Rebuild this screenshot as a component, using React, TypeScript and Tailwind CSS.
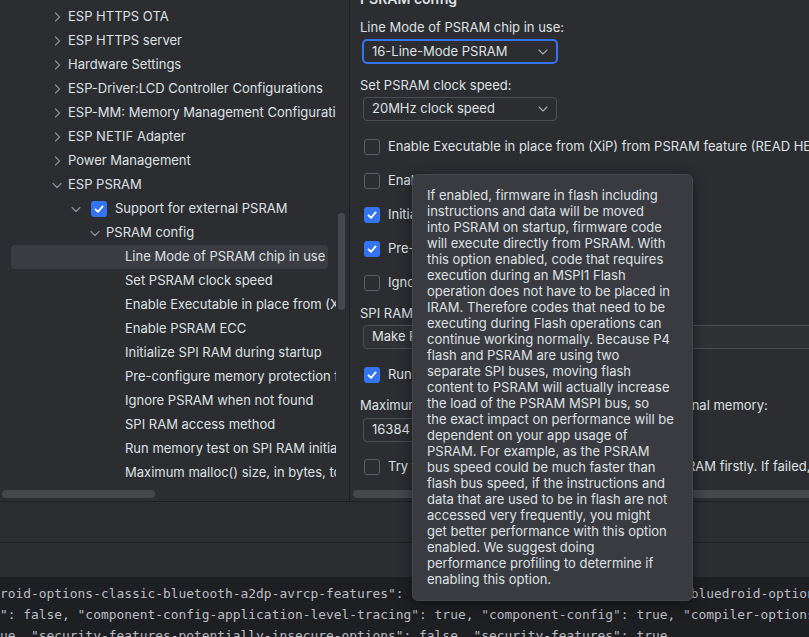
import React from 'react';

type Node = {
  label: string;
  level: number;
  chevron?: 'right' | 'down';
  checkbox?: boolean;
  selected?: boolean;
};

const tree: Node[] = [
  { label: 'ESP HTTPS OTA', level: 0, chevron: 'right' },
  { label: 'ESP HTTPS server', level: 0, chevron: 'right' },
  { label: 'Hardware Settings', level: 0, chevron: 'right' },
  { label: 'ESP-Driver:LCD Controller Configurations', level: 0, chevron: 'right' },
  { label: 'ESP-MM: Memory Management Configurations', level: 0, chevron: 'right' },
  { label: 'ESP NETIF Adapter', level: 0, chevron: 'right' },
  { label: 'Power Management', level: 0, chevron: 'right' },
  { label: 'ESP PSRAM', level: 0, chevron: 'down' },
  { label: 'Support for external PSRAM', level: 1, chevron: 'down', checkbox: true },
  { label: 'PSRAM config', level: 2, chevron: 'down' },
  { label: 'Line Mode of PSRAM chip in use', level: 3, selected: true },
  { label: 'Set PSRAM clock speed', level: 3 },
  { label: 'Enable Executable in place from (XiP) from PSRAM feature', level: 3 },
  { label: 'Enable PSRAM ECC', level: 3 },
  { label: 'Initialize SPI RAM during startup', level: 3 },
  { label: 'Pre-configure memory protection for PSRAM', level: 3 },
  { label: 'Ignore PSRAM when not found', level: 3 },
  { label: 'SPI RAM access method', level: 3 },
  { label: 'Run memory test on SPI RAM initialization', level: 3 },
  { label: 'Maximum malloc() size, in bytes, to always put in internal memory', level: 3 },
];

const tooltip = [
  'If enabled, firmware in flash including',
  'instructions and data will be moved',
  'into PSRAM on startup, firmware code',
  'will execute directly from PSRAM. With',
  'this option enabled, code that requires',
  'execution during an MSPI1 Flash',
  'operation does not have to be placed in',
  'IRAM. Therefore codes that need to be',
  'executing during Flash operations can',
  'continue working normally. Because P4',
  'flash and PSRAM are using two',
  'separate SPI buses, moving flash',
  'content to PSRAM will actually increase',
  'the load of the PSRAM MSPI bus, so',
  'the exact impact on performance will be',
  'dependent on your app usage of',
  'PSRAM. For example, as the PSRAM',
  'bus speed could be much faster than',
  'flash bus speed, if the instructions and',
  'data that are used to be in flash are not',
  'accessed very frequently, you might',
  'get better performance with this option',
  'enabled. We suggest doing',
  'performance profiling to determine if',
  'enabling this option.',
];

const consoleLines = [
  'roid-options-classic-bluetooth-a2dp-avrcp-features": true, "bt-bluedroid-option": true, "bluedroid-options-ble": true',
  '": false, "component-config-application-level-tracing": true, "component-config": true, "compiler-options": true',
  'ue, "security-features-potentially-insecure-options": false, "security-features": true',
];

function Chevron({ dir }: { dir: 'right' | 'down' }) {
  return (
    <svg width="12" height="12" viewBox="0 0 12 12" fill="none" stroke="#8c8f96" strokeWidth="1.2" strokeLinecap="round" strokeLinejoin="round">
      {dir === 'right' ? <path d="M4.5 2 L8.5 6 L4.5 10" /> : <path d="M2 4.5 L6 8.5 L10 4.5" />}
    </svg>
  );
}

function Check({ checked }: { checked: boolean }) {
  return checked ? (
    <div className="w-4 h-4 rounded-[3px] bg-[#3574f0] flex items-center justify-center shrink-0">
      <svg width="12" height="12" viewBox="0 0 12 12" fill="none" stroke="white" strokeWidth="1.8" strokeLinecap="round" strokeLinejoin="round">
        <path d="M2.5 6.3 L5 8.8 L9.6 3.4" />
      </svg>
    </div>
  ) : (
    <div className="w-4 h-4 rounded-[3px] border border-[#5c5f65] shrink-0" />
  );
}

function DropChevron() {
  return (
    <svg width="10" height="6" viewBox="0 0 10 6" fill="none" stroke="#a8abb0" strokeWidth="1.1" strokeLinecap="round" strokeLinejoin="round">
      <path d="M1 1 L5 5 L9 1" />
    </svg>
  );
}

function CheckRow({ checked, label, className = '' }: { checked: boolean; label: string; className?: string }) {
  return (
    <div className={`h-6 flex items-center gap-2 pl-[4px] whitespace-nowrap ${className}`}>
      <Check checked={checked} />
      <span>{label}</span>
    </div>
  );
}

export default function App() {
  return (
    <div className="w-[809px] h-[637px] overflow-hidden relative bg-[#2b2d30] text-[#dfe1e5] text-[13px] font-['Inter','Noto_Sans',sans-serif]">
      <div className="flex h-[502px] border-b border-[#1e1f22]">
        {/* tree */}
        <div className="w-[350px] border-r border-[#1e1f22] flex flex-col">
          <div className="flex h-[488px]">
            <div className="w-[336px] overflow-hidden pt-[5px] pl-[11px]">
              {tree.map((n) => (
                <div
                  key={n.label}
                  className={`h-6 flex items-center whitespace-nowrap rounded-[4px] w-[317px] ${n.selected ? 'bg-[#3a3c41]' : ''}`}
                >
                  <div className="flex items-center" style={{ paddingLeft: 40 + n.level * 19 }}>
                    <div className="w-3 h-3 mr-[5px] shrink-0">{n.chevron && <Chevron dir={n.chevron} />}</div>
                    {n.checkbox && (
                      <div className="ml-[4px] mr-[8px]">
                        <Check checked />
                      </div>
                    )}
                    <span>{n.label}</span>
                  </div>
                </div>
              ))}
            </div>
            <div className="flex-1 pt-[213px] pl-[2px]">
              <div className="w-[7px] h-[97px] rounded-full bg-[#46484d]" />
            </div>
          </div>
          <div className="pt-[2px] pl-[2px]">
            <div className="w-[153px] h-2 rounded-full bg-[#45474b]" />
          </div>
        </div>

        {/* settings form */}
        <div className="flex-1 flex flex-col overflow-hidden">
          <div className="h-[488px] overflow-hidden pl-[10px]">
            <div className="-mt-[11px] flex flex-col whitespace-nowrap">
              <div className="h-5 text-[14px] font-semibold leading-5">PSRAM config</div>
              <div className="mt-[10px] h-4 leading-4">Line Mode of PSRAM chip in use:</div>
              <div className="mt-[4px] ml-[2px] w-[196px] h-[25px] rounded-[5px] border-2 border-[#3574f0] bg-[#2b2d30] flex items-center justify-between pl-[8px] pr-[8px]">
                <span>16-Line-Mode PSRAM</span>
                <DropChevron />
              </div>
              <div className="mt-[13px] h-4 leading-4">Set PSRAM clock speed:</div>
              <div className="mt-[4px] ml-[3px] w-[194px] h-6 rounded-[4px] border border-[#4b4e53] bg-[#2b2d30] flex items-center justify-between pl-[8px] pr-[8px]">
                <span>20MHz clock speed</span>
                <DropChevron />
              </div>
              <div className="mt-[14px] flex flex-col gap-[10px]">
                <CheckRow checked={false} label="Enable Executable in place from (XiP) from PSRAM feature (READ HELP)" />
                <CheckRow checked={false} label="Enable PSRAM ECC" />
                <CheckRow checked label="Initialize SPI RAM during startup" />
                <CheckRow checked label="Pre-configure memory protection for PSRAM" />
                <CheckRow checked={false} label="Ignore PSRAM when not found" />
              </div>
              <div className="mt-[10px] h-4 leading-4">SPI RAM access method:</div>
              <div className="mt-[4px] ml-[3px] w-[520px] h-6 rounded-[4px] border border-[#4b4e53] bg-[#2f3134] flex items-center pl-[8px]">
                <span>Make RAM allocatable using malloc() as well</span>
              </div>
              <CheckRow className="mt-[14px]" checked label="Run memory test on SPI RAM initialization" />
              <div className="mt-[10px] h-4 leading-4">Maximum malloc() size, in bytes, to always put in internal memory:</div>
              <div className="mt-[5px] ml-[3px] w-[120px] h-6 rounded-[4px] border border-[#4b4e53] bg-[#2b2d30] flex items-center pl-[8px]">
                <span>16384</span>
              </div>
              <CheckRow
                className="mt-[13px]"
                checked={false}
                label="Try to allocate memories of WiFi and LWIP in SPIRAM firstly. If failed, allocate internal memory"
              />
            </div>
          </div>
          <div className="pt-[2px] pl-[3px]">
            <div className="w-[520px] h-2 rounded-l-full bg-[#45474b]" />
          </div>
        </div>
      </div>

      <div className="h-[41px] border-b border-[#1e1f22]" />
      <div className="h-[34px]" />

      <div className="h-[60px] bg-[#1e1f22] pt-[6px] font-['DejaVu_Sans_Mono',monospace] text-[12.9px] leading-[21px] text-[#bcbec4] whitespace-pre">
        {consoleLines.map((l) => (
          <div key={l}>{l}</div>
        ))}
      </div>

      {/* hover tooltip */}
      <div className="absolute left-[412px] top-[174px] w-[281px] h-[427px] rounded-[6px] bg-[#393b40] border border-[#45474c] shadow-[0_4px_14px_rgba(0,0,0,0.45)] pl-[14px] pt-[12px] leading-4 whitespace-nowrap">
        {tooltip.map((l) => (
          <div key={l}>{l}</div>
        ))}
      </div>
    </div>
  );
}
